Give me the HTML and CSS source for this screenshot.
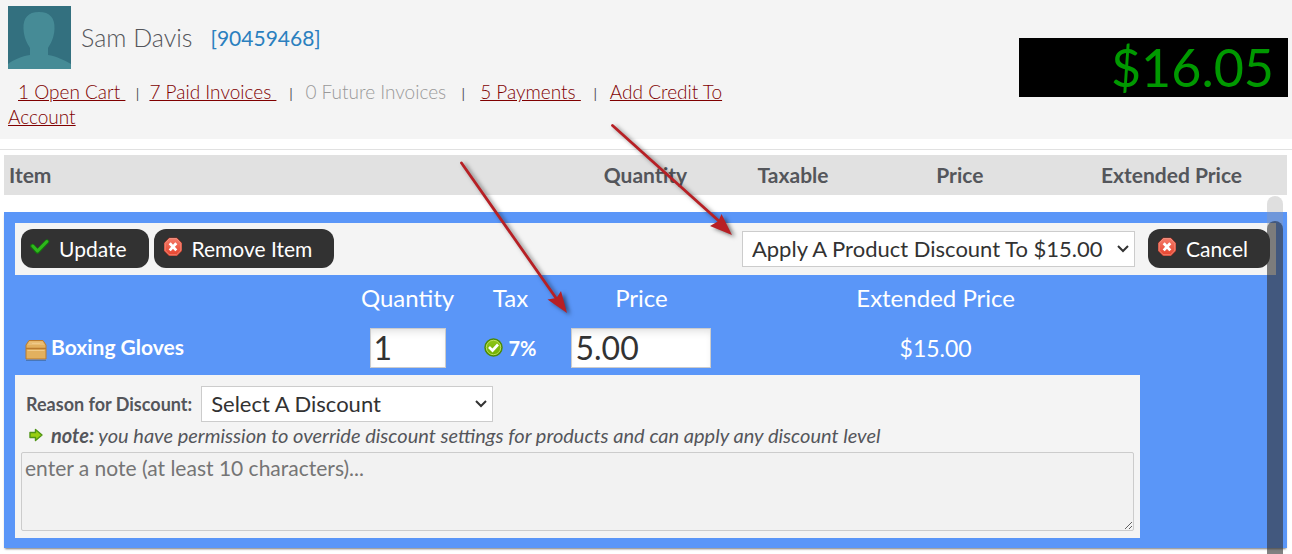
FILE: index.html
```html
<!DOCTYPE html>
<html lang="en">
<head>
<meta charset="utf-8">
<meta name="viewport" content="width=device-width, initial-scale=1">
<title>Sam Davis - Cart</title>
<link rel="stylesheet" href="styles.css">
</head>
<body>
<svg class="defs" width="0" height="0" aria-hidden="true">
  <defs>
    <linearGradient id="red" x1="0" y1="0" x2="0" y2="1"><stop offset="0" stop-color="#f47a68"/><stop offset="1" stop-color="#e8452f"/></linearGradient>
    <linearGradient id="green" x1="0" y1="0" x2="0" y2="1"><stop offset="0" stop-color="#8fc61b"/><stop offset="1" stop-color="#6fb000"/></linearGradient>
    <symbol id="stop" viewBox="0 0 20 20">
      <path d="M6 .8h8L19 6v8l-5 5H6l-5-5V6z" fill="#c43422"/>
      <path d="M6.400 1.600h7.200L18 6.300v7.200l-4.400 4.400H6.400L2 13.500V6.300z" fill="url(#red)" stroke="#f6a394" stroke-width=".8"/>
      <path d="M6.700 6.200l6.600 7.200M13.300 6.200l-6.600 7.200" stroke="#fff" stroke-width="2.800"/>
    </symbol>
  </defs>
</svg>

<header class="customer">
  <div class="customer-info">
    <div class="identity">
      <svg class="avatar" viewBox="0 0 63 63" role="img" aria-label="Customer photo">
        <rect width="63" height="63" fill="#33707f"/>
        <path d="M31 6C20 6 15 12 15.500 23C16 32 19 37 22 42V49C14 50 5 54 0 58V63H63V58C56 54 48 50 40 49V42C43 37 46 32 46.500 23C47 12 42 6 31 6Z" fill="#468b96"/>
      </svg>
      <h1 class="name">Sam Davis</h1>
      <a class="account" href="#">[90459468]</a>
    </div>
    <nav class="links">
      <a href="#">1 Open Cart&nbsp;</a><span class="bar tight">|</span><a href="#">7 Paid Invoices&nbsp;</a><span class="bar">|</span><span class="off">0 Future Invoices</span><span class="bar wide">|</span><a href="#">5 Payments&nbsp;</a><span class="bar">|</span><a href="#">Add Credit To Account</a>
    </nav>
  </div>
  <output class="total">$16.05</output>
</header>

<main class="cart">
  <table class="columns">
    <colgroup><col class="c-item"><col class="c-qty"><col class="c-tax"><col class="c-price"><col></colgroup>
    <thead><tr><th class="left">Item</th><th>Quantity</th><th>Taxable</th><th>Price</th><th>Extended Price</th></tr></thead>
  </table>

  <div class="scroller">
    <form class="editor">
      <div class="toolbar">
        <button class="btn" type="button">
          <svg class="icon" viewBox="0 0 20 20" aria-hidden="true"><path d="M2.500 9l5 5.500L17 4.500" fill="none" stroke="#127a0c" stroke-width="4.400" stroke-linejoin="round" stroke-linecap="round"/><path d="M2.800 9l4.700 5L16.800 4.500" fill="none" stroke="#2fb81c" stroke-width="3" stroke-linejoin="round" stroke-linecap="round"/></svg>
          Update</button>
        <button class="btn" type="button"><svg class="icon" aria-hidden="true"><use href="#stop"/></svg>Remove Item</button>
        <select class="pick action" aria-label="Action"><option>Apply A Product Discount To $15.00</option></select>
        <button class="btn" type="button"><svg class="icon" aria-hidden="true"><use href="#stop"/></svg>Cancel</button>
      </div>

      <div class="body">
        <table class="line">
          <colgroup><col class="l-item"><col class="l-qty"><col class="l-tax"><col class="l-price"><col></colgroup>
          <thead><tr><td></td><th id="h-qty">Quantity</th><th>Tax</th><th id="h-price">Price</th><th>Extended Price</th></tr></thead>
          <tbody><tr>
            <td class="product"><svg class="box" viewBox="0 0 22 22" aria-hidden="true"><path d="M1 21h20v1H1z" fill="#4876b8"/><path d="M4 1.500h14l3 4.500v14H1V6z" fill="#e2b05f" stroke="#b97a2e"/><path d="M4.500 2.500h13l2 3.500h-17z" fill="#e9bd75"/><path d="M1 9.500h20" stroke="#b97a2e" stroke-width="1.500"/><path d="M2.500 11.500h17M7 4.500h8" stroke="#f0ca88"/></svg>Boxing Gloves</td>
            <td><input class="field qty" type="text" value="1" aria-labelledby="h-qty"></td>
            <td class="tax"><svg class="ok" viewBox="0 0 19 19" aria-hidden="true"><circle cx="9.500" cy="9.500" r="8.500" fill="url(#green)" stroke="#4c8a06" stroke-width="1.500"/><circle cx="9.500" cy="9.500" r="7.200" fill="none" stroke="#b9dd5c"/><path d="M5 9l3.500 3.500L14 6.500" fill="none" stroke="#fff" stroke-width="2.600"/></svg>7%</td>
            <td><input class="field price" type="text" value="5.00" aria-labelledby="h-price"></td>
            <td class="amount">$15.00</td>
          </tr></tbody>
        </table>

        <div class="discount">
          <div class="reason">
            <label for="reason">Reason for Discount:</label>
            <select class="pick why" id="reason"><option>Select A Discount</option></select>
          </div>
          <p class="hint"><svg class="arrow" viewBox="0 0 14 14" aria-hidden="true"><path d="M1 4.500h5.500V1.500L13 7l-6.500 5.500v-3H1z" fill="#98cf10" stroke="#4f9415" stroke-width="1.400" stroke-linejoin="round"/></svg><span><b>note:</b> you have permission to override discount settings for products and can apply any discount level</span></p>
          <textarea class="note" aria-label="Note" placeholder="enter a note (at least 10 characters)..."></textarea>
        </div>
      </div>
    </form>
    <div class="track"><div class="thumb"></div></div>
  </div>
</main>

<svg class="pointers" width="300" height="200" viewBox="450 120 300 200" aria-hidden="true">
  <g fill="#b72025" stroke="#b72025">
    <path d="M461.500 163L556 298M612.500 125.500L720 222" fill="none" stroke-width="2.800" stroke-linecap="round"/>
    <path d="M567 313l-19.500-13.500 9-1.500 4.500-7zM732 235l-22-9 8.500-5 3-7z" stroke="none"/>
  </g>
</svg>
</body>
</html>
```
FILE: styles.css
```css
* { box-sizing: border-box; }
body {
  margin: 0;
  height: 100vh;
  overflow: hidden;
  display: flex;
  flex-direction: column;
  position: relative;
  background: #fff;
  color: #54565b;
  font-family: Lato, "Open Sans", sans-serif;
  font-size: 20px;
}
button, input, select, textarea { font-family: inherit; }
.defs { position: absolute; }

.customer {
  display: flex;
  justify-content: space-between;
  align-items: flex-start;
  background: #f4f4f4;
  padding: 6px 4px 10px 8px;
}
.customer-info { flex: 0 0 58%; }
.identity { display: flex; align-items: center; }
.avatar { width: 63px; height: 63px; }
.name { margin: 0 18px 2px 10px; font-size: 25px; font-weight: 300; }
.account { color: #2b80bf; font-size: 21px; text-decoration: none; }
.links { margin-top: 10px; text-indent: 10px; line-height: 25px; font-size: 19px; font-weight: 300; }
.links a { color: #800000; }
.bar { display: inline-block; width: 29px; text-indent: 0; text-align: center; font-size: 14px; font-weight: 400; line-height: 20px; }
.tight { width: 24px; }
.wide { width: 34px; }
.off { color: #999; }
.total {
  flex: 0 0 21%;
  margin-top: 32px;
  padding-right: 14px;
  background: #000;
  color: #090;
  font-size: 52px;
  font-weight: 400;
  line-height: 59px;
  text-align: right;
}

.cart {
  flex: 1;
  display: flex;
  flex-direction: column;
  margin-top: 10px;
  padding: 5px 5px 0 4px;
  border-top: 1px solid #e1e1e1;
}
table { width: 100%; table-layout: fixed; border-collapse: collapse; }
th, td { padding: 0; text-align: center; }
.columns { background: #e1e1e1; }
.columns th { height: 40px; padding-bottom: 2px; font-size: 21px; font-weight: 700; }
.columns .left { padding-left: 5px; text-align: left; }
.c-item { width: 44%; }
.c-qty { width: 12%; }
.c-tax { width: 11%; }
.c-price { width: 15%; }

.scroller { flex: 1; position: relative; padding-top: 17px; }
.editor { padding: 11px 11px 10px; background: #5a96f8; box-shadow: 0 2px 2px -1px #777; }
.toolbar { display: flex; align-items: center; gap: 5px; padding: 6px 6px 7px; background: #f4f4f4; }
.btn {
  display: flex;
  align-items: center;
  gap: 9px;
  height: 39px;
  padding: 0 22px 0 9px;
  border: 0;
  border-radius: 12px;
  background: #323232;
  color: #fff;
  font-size: 21px;
}
.icon { width: 20px; height: 20px; margin-bottom: 3px; }
.pick {
  appearance: none;
  border: 1px solid #ccc;
  border-radius: 0;
  height: 36px;
  padding: 0 24px 1px 9px;
  color: #323232;
  font-size: 22px;
  background: #fff url('data:image/svg+xml,<svg xmlns="http://www.w3.org/2000/svg" width="14" height="10"><path d="M2 2l5 5 5-5" fill="none" stroke="%23333" stroke-width="2"/></svg>') no-repeat right 4px center;
}
.action { width: 393px; margin: 0 8px 0 auto; }
.body { width: 89.2%; }
.line { color: #fff; font-size: 24px; }
.line thead th { height: 45px; font-weight: 400; }
.line tbody td { height: 55px; vertical-align: middle; }
.l-item { width: 29.4%; }
.l-qty { width: 11%; }
.l-tax { width: 7.3%; }
.l-price { width: 16%; }
.line .product { padding-left: 10px; text-align: left; font-size: 21px; font-weight: 700; }
.box { width: 22px; height: 22px; margin-right: 4px; vertical-align: -6px; }
.ok { width: 19px; height: 19px; margin-right: 5px; vertical-align: -1px; }
.line .tax { font-size: 20px; font-weight: 700; }
.line .amount { font-size: 23px; }
.field {
  height: 40px;
  padding: 0 3px;
  border: 1px solid #ccc;
  color: #323232;
  font-size: 32px;
  box-shadow: inset 0 6px 8px -4px #ddd;
  vertical-align: middle;
}
.qty { width: 76px; }
.price { width: 140px; }

.discount { padding: 11px 6px 7px; background: #f4f4f4; }
.reason { display: flex; align-items: center; gap: 9px; padding-left: 5px; font-size: 18px; font-weight: 700; }
.why { width: 292px; }
.hint { display: flex; align-items: center; gap: 8px; margin: 0; padding-left: 8px; line-height: 26px; font-size: 20px; font-style: italic; }
.arrow { width: 14px; height: 14px; }
.note {
  display: block;
  width: 100%;
  height: 79px;
  margin-top: 4px;
  padding: 2px 3px;
  border: 1px solid #ccc;
  border-radius: 2px;
  background: #f2f2f2;
  font-size: 21px;
}
.note::placeholder { color: #757575; }

.track {
  position: absolute;
  top: 1px;
  right: 4px;
  bottom: 0;
  width: 16px;
  padding-top: 25px;
  border-radius: 8px 8px 0 0;
  background: rgba(155, 155, 155, .32);
}
.thumb { height: 100%; border-radius: 8px 8px 0 0; background: rgba(10, 10, 10, .44); }
.pointers { position: absolute; left: 450px; top: 120px; pointer-events: none; filter: drop-shadow(3px 2px 2px rgba(0, 0, 0, .5)); }
```
